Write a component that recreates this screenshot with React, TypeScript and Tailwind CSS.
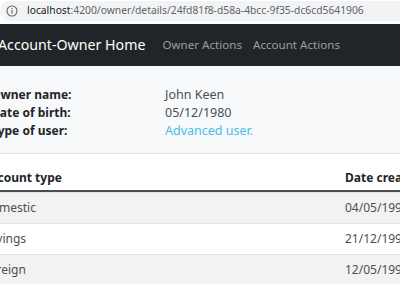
import React from "react";

export default function App() {
  const rows = [
    { type: "Domestic", date: "04/05/1999" },
    { type: "Savings", date: "21/12/1999" },
    { type: "Foreign", date: "12/05/1999" },
  ];
  return (
    <div className="w-[400px] h-[284px] overflow-hidden bg-white font-['Noto_Sans',sans-serif] relative">
      {/* address bar */}
      <div className="h-[24px] pt-[1px] bg-white">
        <div className="h-[20px] bg-[#f1f3f4] rounded-l-full flex items-center pl-[6px] whitespace-nowrap">
          <svg width="12" height="12" viewBox="0 0 12 12" className="shrink-0">
            <circle cx="6" cy="6" r="5" fill="none" stroke="#5f6368" strokeWidth="1.1" />
            <rect x="5.45" y="5" width="1.1" height="3.6" fill="#5f6368" />
            <rect x="5.45" y="3" width="1.1" height="1.1" fill="#5f6368" />
          </svg>
          <span className="ml-[9px] text-[10.3px] text-[#5f6368]">
            <span className="text-[#202124]">localhost</span>:4200/owner/details/24fd81f8-d58a-4bcc-9f35-dc6cd5641906
          </span>
        </div>
      </div>
      {/* navbar */}
      <div className="h-[42px] bg-[#212529] flex items-center whitespace-nowrap">
        <span className="ml-[-2px] text-[14.2px] text-white">Account-Owner Home</span>
        <span className="ml-[17px] text-[11.6px] text-[#9a9da0]">Owner Actions</span>
        <span className="ml-[11px] text-[11.6px] text-[#9a9da0]">Account Actions</span>
      </div>
      {/* info panel */}
      <div className="h-[88px] bg-[#f8f9fa] border-b border-[#dee2e6] pt-[20px]">
        <div className="ml-[-9px] grid grid-cols-[174px_1fr] text-[12px] leading-[18px] text-[#212529] whitespace-nowrap">
          <span className="font-bold">Owner name:</span>
          <span className="text-[#495057] text-[12.5px]">John Keen</span>
          <span className="font-bold">Date of birth:</span>
          <span className="text-[#495057] text-[12.5px]">05/12/1980</span>
          <span className="font-bold">Type of user:</span>
          <span className="text-[#45c1e6] text-[12.5px]">Advanced user.</span>
        </div>
      </div>
      {/* table */}
      <div className="w-[600px] mt-[12px] ml-[-17px] text-[12px] text-[#212529] whitespace-nowrap">
        <div className="flex h-[26px] items-center border-b-2 border-[#4a4d50] font-bold">
          <span className="w-[362px] shrink-0">Account type</span>
          <span>Date created</span>
        </div>
        {rows.map((r, i) => (
          <div
            key={r.type}
            className={`flex h-[31px] items-center border-t border-[#e3e5e7] text-[#495057] ${
              i % 2 === 0 ? "bg-[#f2f2f2]" : "bg-white"
            }`}
          >
            <span className="w-[362px] shrink-0">{r.type}</span>
            <span>{r.date}</span>
          </div>
        ))}
      </div>
    </div>
  );
}
